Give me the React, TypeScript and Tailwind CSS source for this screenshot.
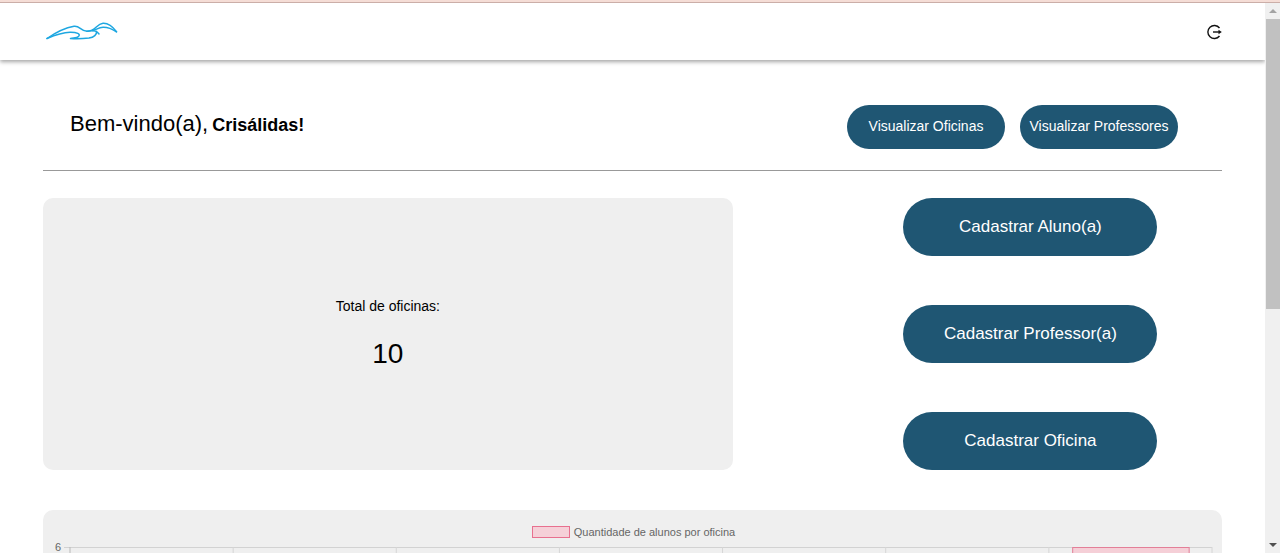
const gridLines = [0, 1, 2, 3, 4, 5, 6, 7];

function GullLogo() {
  return (
    <svg viewBox="0 0 72 20" className="h-5 w-[72px]" fill="none" stroke="#1ea7e1" strokeWidth="1.5" strokeLinecap="round" strokeLinejoin="round" aria-hidden="true">
      <path d="M1 16.500C9 11 18 6 28 4.300C34 3.500 34 8.800 41 9.200C50 9.400 50 2 57 1.300C63 1 67 5 70.500 9.800" />
      <path d="M1 16.500C8 13.500 16 10.500 24 10.300C31 10.200 35 12 32.500 14.500C31 16.200 28 15.800 24.500 16.500C31 17 38 16.600 43 16C48 15.200 51 12.500 50.500 9.500" />
      <path d="M41 9.200C49 9.500 51 5.500 57 5.200C62 5 66 6.800 70.500 9.800" />
      <path d="M47 8.900C50.500 8.500 51.500 10.200 53 12" />
    </svg>
  );
}

function LogoutIcon() {
  return (
    <svg viewBox="0 0 16 16" className="size-4" fill="none" stroke="#111" strokeWidth="1.4" aria-hidden="true">
      <path d="M13.500 4A6.500 6.500 0 1 0 13.500 12" />
      <path d="M7 8H14" />
      <path d="M12.500 5.700L15.800 8L12.500 10.300Z" fill="#111" stroke="none" />
    </svg>
  );
}

function SmallAction({ children }: { children: string }) {
  return (
    <button type="button" className="h-11 w-[158px] rounded-full bg-[#1f5673] pb-0.5 text-sm whitespace-nowrap text-white">
      {children}
    </button>
  );
}

function LargeAction({ children }: { children: string }) {
  return (
    <button type="button" className="h-[58px] w-[254px] rounded-full bg-[#1f5673] text-[17px] text-white">
      {children}
    </button>
  );
}

function Chart() {
  return (
    <section className="mt-10 h-[480px] rounded-[10px] bg-[#efefef] pt-4 pr-[10px] pl-3">
      <div className="flex h-3 items-center justify-center gap-1 text-[11px] text-[#666]">
        <span className="h-3 w-[38px] border border-[#e8708f] bg-[#f5d0d8]" />
        <span>Quantidade de alunos por oficina</span>
      </div>
      <div className="mt-[9px] flex items-start">
        <span className="-mt-2 w-[9px] text-[11px] leading-4 text-[#666]">6</span>
        <svg className="h-[400px] min-w-0 flex-1 overflow-visible pl-[6px]" aria-label="Quantidade de alunos por oficina" role="img">
          <line x1="-6" x2="100%" y1="0.5" y2="0.5" stroke="#d2d2d2" />
          {gridLines.map((n) => (
            <line key={n} x1={`${(n * 100) / 7}%`} x2={`${(n * 100) / 7}%`} y1="0" y2="100%" stroke={n === 0 ? "#b9b9b9" : "#d6d6d6"} />
          ))}
          <rect x="87.8%" y="0.5" width="10.2%" height="100%" fill="#f5cfd7" stroke="#e37f98" />
        </svg>
      </div>
    </section>
  );
}

function ScrollRail() {
  return (
    <div className="flex w-[15px] shrink-0 flex-col items-center bg-[#f0f0f0]" aria-hidden="true">
      <svg viewBox="0 0 15 16" className="h-4 w-[15px] shrink-0">
        <path d="M4 10L8 6L12 10Z" fill="#a3a3a3" />
      </svg>
      <div className="min-h-0 w-full flex-1 pl-px">
        <div className="h-[56%] bg-[#c1c1c1]" />
      </div>
      <svg viewBox="0 0 15 16" className="h-4 w-[15px] shrink-0">
        <path d="M4 6L8 10L12 6Z" fill="#505050" />
      </svg>
    </div>
  );
}

export default function App() {
  return (
    <div className="flex h-screen flex-col bg-white font-['Liberation_Sans',Arial,sans-serif] text-black">
      <div className="h-[3px] shrink-0 border-b border-[#cbaea8] bg-[#f5ddd6]" />
      <div className="flex min-h-0 flex-1">
        <div className="min-w-0 flex-1 overflow-hidden">
          <header className="flex h-[57px] items-center justify-between pr-[43px] pl-[46px] shadow-[0_2px_4px_rgba(0,0,0,0.35)]">
            <a href="#" aria-label="Início"><GullLogo /></a>
            <button type="button" aria-label="Sair"><LogoutIcon /></button>
          </header>
          <main className="px-[43px] pt-[45px]">
            <div className="flex items-start justify-between border-b border-[#999] pr-11 pb-[21px] pl-[27px]">
              <h1 className="flex items-baseline gap-1 pt-[3px] text-[22px] leading-8">
                <span>Bem-vindo(a),</span> <strong className="text-lg">Crisálidas!</strong>
              </h1>
              <nav className="flex gap-[15px]">
                <SmallAction>Visualizar Oficinas</SmallAction>
                <SmallAction>Visualizar Professores</SmallAction>
              </nav>
            </div>
            <div className="mt-[27px] flex justify-between">
              <section className="flex w-[58.5%] flex-col items-center justify-center gap-5 rounded-[10px] bg-[#efefef] pb-1">
                <p className="text-sm leading-6">Total de oficinas:</p>
                <p className="text-[28px] leading-8">10</p>
              </section>
              <div className="flex w-[32.5%] flex-col items-center gap-[49px]">
                <LargeAction>Cadastrar Aluno(a)</LargeAction>
                <LargeAction>Cadastrar Professor(a)</LargeAction>
                <LargeAction>Cadastrar Oficina</LargeAction>
              </div>
            </div>
            <Chart />
          </main>
        </div>
        <ScrollRail />
      </div>
    </div>
  );
}
